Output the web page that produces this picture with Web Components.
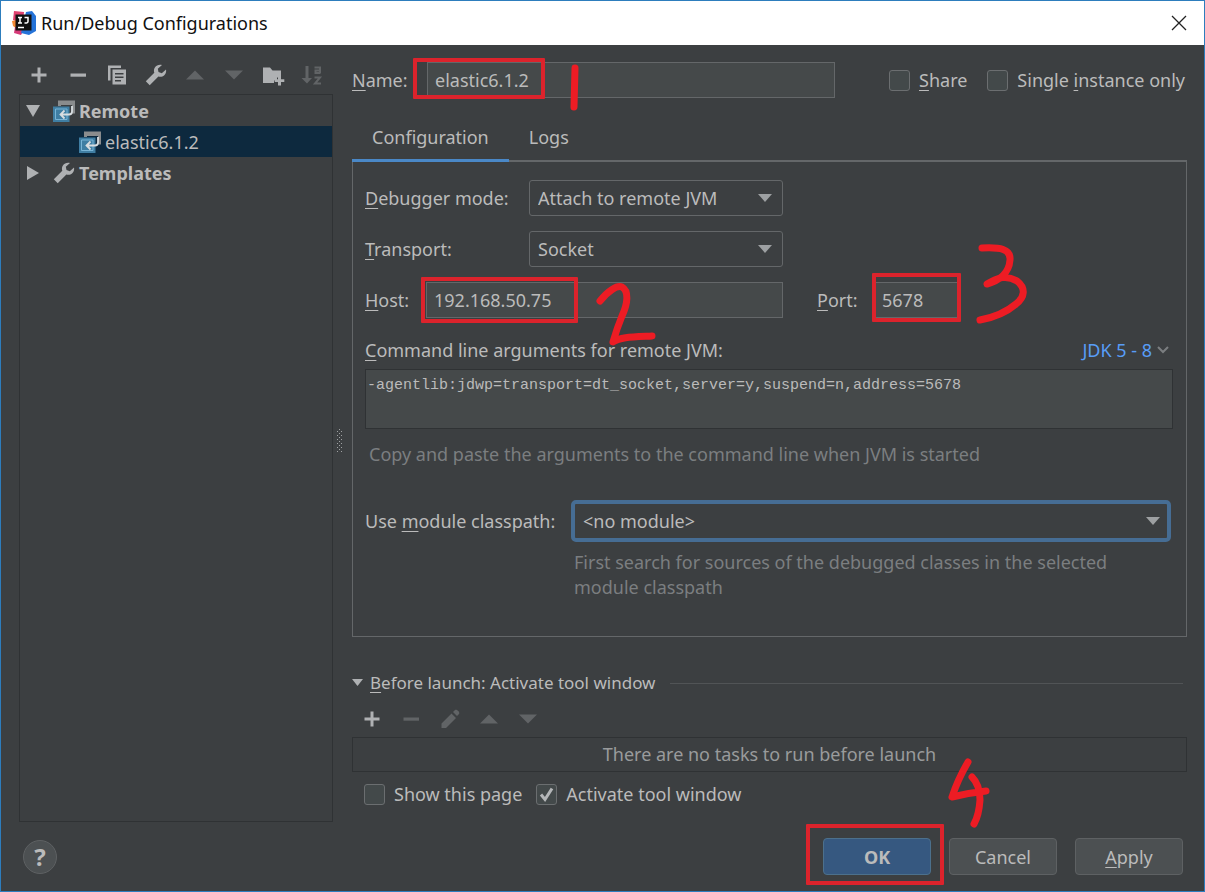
<!DOCTYPE html>
<html lang="en">
<head>
<meta charset="utf-8">
<meta name="viewport" content="width=device-width, initial-scale=1">
<title>Run/Debug Configurations</title>
<style>
  html, body { margin: 0; }
  body {
    background: #3c3f41; color: #bbbbbb;
    font: 18px/24px "Noto Sans", "Open Sans", sans-serif;
  }
</style>
</head>
<body>
<run-config-dialog></run-config-dialog>

<script>
const define = (name, html, setup) => {
  const template = document.createElement('template');
  template.innerHTML = html;
  customElements.define(name, class extends HTMLElement {
    constructor() {
      super();
      this.attachShadow({ mode: 'open' }).append(template.content.cloneNode(true));
    }
    connectedCallback() { if (setup) setup(this, this.shadowRoot); }
  });
};

/* 24 x 24 glyphs, painted with currentColor */
const ICONS = {
  add: '<path d="M10.5 4.5h3v6h6v3h-6v6h-3v-6h-6v-3h6z"/>',
  remove: '<path d="M4.500 10.500h15.500v3.200H4.500z"/>',
  copy: '<path d="M3 2.500h13v2.500H5.500v12.500H3z"/><path fill-rule="evenodd" d="M7.500 6.500h13.500v15H7.500zM10 10v1.500h8.500V10zm0 3.500V15h8.500v-1.500zM10 17v1.500h6V17z"/>',
  wrench: '<path d="M22 6.600l-4.200 3.600-3.300-1.100-.7-3.300 4.200-3.700c-2.800-.7-5.600.2-7.100 2.400-1.100 1.600-1.200 3.500-.6 5.200L1.800 18.300l3.900 3.900 8.700-8.700c2 .7 4.200.3 5.900-1.200 1.600-1.400 2.200-3.600 1.700-5.700z"/>',
  up: '<path d="M3 16.500l9-9 9 9z"/>',
  down: '<path d="M3 7.500h18l-9 9z"/>',
  folder: '<path d="M2 4.500h7l2.500 3H20v7h-4v3h-3V20H2z"/><path d="M17 13h3v3.300h3.300v2.800H20v3.300h-3v-3.300h-3.300v-2.800H17z"/>',
  sort: '<path d="M5.500 3h3v12H12l-5 5.500L1.500 15h4z"/><path fill="none" stroke="currentColor" stroke-width="2" d="M14.500 4.500h5.500v6M20 7.500h-4.500v2.500H20M14.500 14.500h5.500l-5 6h6"/>',
  edit: '<path d="M3.500 16.500L13.500 6.500l4.500 4.500L8 21H3.500zM15 5l2-2c1.500-1.300 5.500 2 4 4l-2 2z"/>',
  remote: '<path fill="#8a8c8d" d="M6 1.500h17v13h-3V6H9v1H6z"/><path fill="#3f7ea3" d="M1 7.500h16.500V23H1z"/><path fill="none" stroke="#78b4d6" d="M3.500 10h11.500v10.500H3.500z"/><path fill="none" stroke="#d8dde0" stroke-width="1.800" d="M20 7v5.500q0 3-3 3H9M12.500 11.500l-4 4 4 4"/>'
};

define('ui-icon', `
<style>
  :host { display: inline-block; width: 24px; height: 24px; flex: none; }
  svg { display: block; width: 100%; height: 100%; fill: currentColor; }
</style>
<svg viewBox="0 0 24 24" aria-hidden="true"></svg>`,
(el, root) => { root.querySelector('svg').innerHTML = ICONS[el.getAttribute('name')] || ''; });

define('tool-button', `
<style>
  :host { display: block; width: 39px; }
  button { display: flex; justify-content: center; width: 100%; padding: 0; border: 0; background: none; color: #afb1b3; }
  button:disabled { color: #616466; }
</style>
<button type="button"><ui-icon></ui-icon></button>`,
(el, root) => {
  const button = root.querySelector('button');
  button.disabled = el.hasAttribute('off');
  button.setAttribute('aria-label', el.getAttribute('label'));
  const icon = document.createElement('ui-icon');
  icon.setAttribute('name', el.getAttribute('icon'));
  root.querySelector('ui-icon').replaceWith(icon);
});

define('title-bar', `
<style>
  :host { display: flex; align-items: center; height: 44px; padding: 0 16px 0 10px; gap: 4px; background: #fff; color: #111; }
  h1 { flex: 1; margin: 0; font-size: 18px; font-weight: 400; }
  .logo { width: 26px; height: 26px; flex: none; }
  button { padding: 0; border: 0; background: none; display: flex; }
</style>
<svg class="logo" viewBox="0 0 26 26" aria-hidden="true">
  <path fill="#e0416f" d="M3 1l10 1-1 12-10-4z"/>
  <path fill="#f58a34" d="M1 11l10-2-2 12-7-5z"/>
  <path fill="#d63a78" d="M4 17l10 1-4 7-7-2z"/>
  <path fill="#2573d8" d="M15 2l6-1 4 5v15l-7 4-8-2z"/>
  <path fill="#111" d="M4.500 4.500h16v16h-16z"/>
  <path fill="none" stroke="#fff" stroke-width="1.500" d="M7 7.500h4M9 7.500v5.400M7 12.900h4M13.500 7.500H17v4q0 1.400-1.400 1.400h-2.100M7 17.500h6"/>
</svg>
<h1><slot></slot></h1>
<button type="button" aria-label="Close"><svg width="18" height="18" viewBox="0 0 18 18"><path stroke="#222" stroke-width="1.300" d="M2 2l14 14M16 2L2 16"/></svg></button>`);

define('tree-row', `
<style>
  :host { display: flex; align-items: center; gap: 3px; height: 31px; padding-left: 6px; }
  :host([group]) { font-weight: 700; }
  :host([selected]) { padding-left: 32px; background: #0d293e; }
  .arrow { width: 23px; height: 14px; fill: #afb1b3; flex: none; }
  ui-icon { color: #afb1b3; }
</style>
<svg class="arrow" viewBox="0 0 23 14" aria-hidden="true"></svg><ui-icon></ui-icon><span><slot></slot></span>`,
(el, root) => {
  const paths = { open: 'M0 1h14l-7 12z', closed: 'M1 0v14l12-7z' };
  const state = paths[el.getAttribute('state')];
  root.querySelector('.arrow').innerHTML = state ? '<path d="' + state + '"/>' : '';
  const icon = document.createElement('ui-icon');
  icon.setAttribute('name', el.getAttribute('icon'));
  root.querySelector('ui-icon').replaceWith(icon);
});

define('text-field', `
<style>
  :host { display: flex; align-items: center; }
  label { flex: none; width: var(--label-width); }
  .control { position: relative; flex: 1; min-width: 0; }
  input { display: block; box-sizing: border-box; width: 100%; height: 36px; padding: 0 7px; border: 1px solid #646769; background: #45494a; color: inherit; font: inherit; outline: 0; }
</style>
<label for="field"><slot></slot></label>
<div class="control"><input id="field" type="text"><slot name="mark"></slot></div>`,
(el, root) => { root.querySelector('input').value = el.getAttribute('value'); });

define('select-field', `
<style>
  :host { display: flex; align-items: center; }
  label { flex: none; width: var(--label-width); }
  .control { display: grid; flex: 1; min-width: 0; align-items: center; }
  select { grid-area: 1 / 1; appearance: none; box-sizing: border-box; width: 100%; height: 36px; padding: 0 8px; border: 1px solid #646769; border-radius: 3px; background: #3c3f41; color: inherit; font: inherit; outline: 0; }
  svg { grid-area: 1 / 1; justify-self: end; margin-right: 11px; fill: #9da0a2; pointer-events: none; }
  :host([active]) select { height: 42px; border: 4px solid #466d94; border-radius: 5px; }
</style>
<label for="field"><slot></slot></label>
<div class="control"><select id="field"><option></option></select><svg width="14" height="8" viewBox="0 0 14 8" aria-hidden="true"><path d="M0 0h14L7 8z"/></svg></div>`,
(el, root) => { root.querySelector('option').textContent = el.getAttribute('value'); });

define('check-field', `
<style>
  :host { display: block; }
  label { display: flex; align-items: center; gap: 9px; white-space: nowrap; }
  .box { display: grid; }
  input { grid-area: 1 / 1; appearance: none; box-sizing: border-box; width: 21px; height: 21px; margin: 0; border: 1px solid #6b6e70; border-radius: 3px; background: #43494a; }
  svg { grid-area: 1 / 1; visibility: hidden; fill: none; stroke: #b4b6b8; stroke-width: 3; pointer-events: none; }
  input:checked + svg { visibility: visible; }
</style>
<label><span class="box"><input type="checkbox"><svg width="21" height="21" viewBox="0 0 21 21" aria-hidden="true"><path d="M5 10.500l4 5L16 4.500"/></svg></span><span><slot></slot></span></label>`,
(el, root) => { root.querySelector('input').checked = el.hasAttribute('checked'); });

define('push-button', `
<style>
  :host { display: block; position: relative; width: 108px; }
  button { box-sizing: border-box; width: 100%; height: 37px; padding: 0; border: 1px solid #5e6163; border-radius: 4px; background: #4c5052; color: inherit; font: inherit; }
  :host([primary]) button { background: #365880; border-color: #4c708c; font-weight: 700; }
</style>
<button type="button"><slot></slot></button><slot name="mark"></slot>`);

/* Red rectangle laid over a control */
define('mark-box', `
<style>
  :host { display: block; position: absolute; box-sizing: border-box; border: 4px solid #dc232c; border-radius: 1px; pointer-events: none; }
</style>`);

/* Freehand pen stroke laid over the dialog */
define('pen-stroke', `
<style>
  :host { display: block; position: absolute; pointer-events: none; z-index: 1; }
  svg { display: block; fill: none; stroke: #ed1c24; stroke-width: 7; stroke-linecap: round; stroke-linejoin: round; }
</style>
<svg role="img"><path/></svg>`,
(el, root) => {
  const svg = root.querySelector('svg');
  const view = el.getAttribute('view');
  const size = view.split(' ');
  svg.setAttribute('viewBox', view);
  svg.setAttribute('width', size[2]);
  svg.setAttribute('height', size[3]);
  svg.setAttribute('aria-label', el.getAttribute('label'));
  root.querySelector('path').setAttribute('d', el.getAttribute('d'));
});

define('config-sidebar', `
<style>
  :host { display: flex; flex-direction: column; }
  .tools { display: flex; padding: 18px 0 7px; }
  .tree { flex: 1; border: 1px solid #2f3234; }
</style>
<div class="tools" role="toolbar">
  <tool-button icon="add" label="Add"></tool-button>
  <tool-button icon="remove" label="Remove"></tool-button>
  <tool-button icon="copy" label="Copy"></tool-button>
  <tool-button icon="wrench" label="Edit templates"></tool-button>
  <tool-button icon="up" label="Move up" off></tool-button>
  <tool-button icon="down" label="Move down" off></tool-button>
  <tool-button icon="folder" label="New folder"></tool-button>
  <tool-button icon="sort" label="Sort" off></tool-button>
</div>
<div class="tree">
  <tree-row group state="open" icon="remote">Remote</tree-row>
  <tree-row selected icon="remote">elastic6.1.2</tree-row>
  <tree-row group state="closed" icon="wrench">Templates</tree-row>
</div>`);

define('tab-strip', `
<style>
  :host { display: flex; height: 48px; box-shadow: inset 0 -2px #646769; }
  button { box-sizing: border-box; height: 48px; padding: 0 20px; border: 0; border-bottom: 3px solid transparent; background: none; color: inherit; font: inherit; }
  button[aria-selected="true"] { border-bottom-color: #4a88c7; }
</style>
<button type="button" role="tab" aria-selected="true">Configuration</button><button type="button" role="tab" aria-selected="false">Logs</button>`);

define('remote-settings', `
<style>
  :host { display: block; padding: 18px 13px 36px 12px; border: 1px solid #646769; border-top: 0; }
  u { text-underline-offset: 3px; }
  .fields { display: grid; grid-template-columns: 418px auto; justify-content: start; gap: 15px 34px; --label-width: 164px; }
  .fields select-field, .fields .host { grid-column: 1; }
  .host { --label-width: 61px; }
  .port { --label-width: 57px; width: 142px; }
  .head { display: flex; justify-content: space-between; margin-top: 20px; padding-right: 4px; }
  a { display: flex; align-items: center; gap: 5px; color: #589df6; text-decoration: none; }
  textarea { display: block; box-sizing: border-box; width: 100%; height: 60px; margin-top: 7px; padding: 6px 1px; border: 1px solid #2f3234; background: #45494a; color: inherit; font: 15px/20px "Liberation Mono", monospace; resize: none; outline: 0; }
  p { margin: 0; color: #7b7e80; }
  .note { margin: 13px 4px 34px; }
  .module { --label-width: 206px; margin-right: 2px; }
  .module-note { margin: 8px 2px 0 209px; max-width: 560px; line-height: 25px; }
</style>
<div class="fields">
  <select-field value="Attach to remote JVM"><u>D</u>ebugger mode:</select-field>
  <select-field value="Socket"><u>T</u>ransport:</select-field>
  <text-field class="host" value="192.168.50.75"><u>H</u>ost:
    <mark-box slot="mark" style="left:-5px;top:-5px;width:157px;height:46px"></mark-box>
    <pen-stroke slot="mark" label="2" style="left:169px;top:-2px" view="595 280 64 70" d="M600 301C608 291 617 285 622 287C629 291 628 303 622 316Q617 328 613 342C620 337 632 337 652 336"></pen-stroke>
  </text-field>
  <text-field class="port" value="5678"><u>P</u>ort:
    <mark-box slot="mark" style="left:-2px;top:-9px;width:89px;height:49px"></mark-box>
    <pen-stroke slot="mark" label="3" style="left:101px;top:-42px" view="975 240 58 90" d="M982 248C1000 247 1011 249 1010 260C1009 274 998 281 987 284C998 277 1007 275 1017 281C1026 288 1025 297 1016 304Q1002 316 980 320"></pen-stroke>
  </text-field>
</div>
<div class="head">
  <label for="args"><u>C</u>ommand line arguments for remote JVM:</label>
  <a href="#jdk">JDK 5 - 8 <svg width="12" height="8" viewBox="0 0 12 8" aria-hidden="true"><path fill="none" stroke="#7b7e80" stroke-width="2" d="M1 1l5 5 5-5"/></svg></a>
</div>
<textarea id="args" readonly>-agentlib:jdwp=transport=dt_socket,server=y,suspend=n,address=5678</textarea>
<p class="note">Copy and paste the arguments to the command line when JVM is started</p>
<select-field class="module" active value="&lt;no module&gt;">Use <u>m</u>odule classpath:</select-field>
<p class="module-note">First search for sources of the debugged classes in the selected module classpath</p>`);

define('before-launch', `
<style>
  :host { display: block; }
  u { text-underline-offset: 3px; }
  h2 { display: flex; align-items: center; gap: 7px; margin: 0; padding-right: 4px; font-size: 17px; font-weight: 400; }
  h2::after { content: ""; flex: 1; margin-left: 8px; border-top: 1px solid #515456; }
  .tools { display: flex; margin: 12px 0 6px; }
  .tasks { box-sizing: border-box; height: 35px; border: 1px solid #2f3234; line-height: 33px; text-align: center; color: #999b9c; }
  .options { display: flex; gap: 14px; margin: 10px 12px 0; }
</style>
<h2><svg width="11" height="8" viewBox="0 0 11 8" aria-hidden="true"><path fill="#afb1b3" d="M0 0h11L5.500 7z"/></svg><span><u>B</u>efore launch: Activate tool window</span></h2>
<div class="tools" role="toolbar">
  <tool-button icon="add" label="Add task"></tool-button>
  <tool-button icon="remove" label="Remove task" off></tool-button>
  <tool-button icon="edit" label="Edit task" off></tool-button>
  <tool-button icon="up" label="Move task up" off></tool-button>
  <tool-button icon="down" label="Move task down" off></tool-button>
</div>
<div class="tasks">There are no tasks to run before launch</div>
<div class="options">
  <check-field>Show this page</check-field>
  <check-field checked>Activate tool window</check-field>
</div>`);

define('run-config-dialog', `
<style>
  :host { display: flex; flex-direction: column; box-sizing: border-box; min-height: 100vh; border: 1px solid #2d7dbd; }
  u { text-underline-offset: 3px; }
  main { flex: 1; display: grid; grid-template-columns: 314px 13px minmax(0, 1fr); padding: 0 17px 0 18px; }
  .divider { display: flex; align-items: center; justify-content: center; padding-top: 14px; }
  .divider svg { fill: #a0a2a4; }
  .editor { padding: 17px 0 0 6px; }
  .identity { display: flex; align-items: center; padding-right: 2px; }
  .identity text-field { --label-width: 75px; flex: 1; margin-right: 54px; }
  .identity check-field + check-field { margin-left: 20px; }
  tab-strip { margin-top: 16px; }
  before-launch { margin-top: 34px; }
  footer { display: flex; align-items: center; gap: 18px; padding: 16px 21px 16px 22px; }
  .help { box-sizing: border-box; width: 34px; height: 34px; margin-right: auto; padding: 0; border: 1px solid #5e6163; border-radius: 50%; background: #4c5052; color: inherit; font: inherit; font-size: 24px; font-weight: 700; }
</style>
<title-bar>Run/Debug Configurations</title-bar>
<main>
  <config-sidebar></config-sidebar>
  <div class="divider"><svg width="6" height="24" viewBox="0 0 6 24" aria-hidden="true"><path d="M0 2h1v1H0zm4 0h1v1H4zM2 0h1v1H2zM0 6h1v1H0zm4 0h1v1H4zM2 4h1v1H2zM0 10h1v1H0zm4 0h1v1H4zM2 8h1v1H2zM0 14h1v1H0zm4 0h1v1H4zM2 12h1v1H2zM0 18h1v1H0zm4 0h1v1H4zM2 16h1v1H2zM0 22h1v1H0zm4 0h1v1H4zM2 20h1v1H2z"/></svg></div>
  <div class="editor">
    <div class="identity">
      <text-field value="elastic6.1.2"><u>N</u>ame:
        <mark-box slot="mark" style="left:-14px;top:-4px;width:132px;height:41px"></mark-box>
        <pen-stroke slot="mark" label="1" style="left:138px;top:-2px" view="565 60 20 55" d="M575 68L574 107"></pen-stroke>
      </text-field>
      <check-field><u>S</u>hare</check-field>
      <check-field>Single <u>i</u>nstance only</check-field>
    </div>
    <tab-strip role="tablist"></tab-strip>
    <remote-settings></remote-settings>
    <before-launch></before-launch>
  </div>
</main>
<footer>
  <button class="help" type="button" aria-label="Help">?</button>
  <push-button primary>OK
    <mark-box slot="mark" style="left:-17px;top:-14px;width:138px;height:61px"></mark-box>
    <pen-stroke slot="mark" label="4" style="left:122px;top:-83px" view="945 755 50 75" d="M968 762Q958 779 952 797Q968 793 986 791M972 777Q980 785 980 800Q979 815 974 824"></pen-stroke>
  </push-button>
  <push-button>Cancel</push-button>
  <push-button><u>A</u>pply</push-button>
</footer>`);
</script>
</body>
</html>
